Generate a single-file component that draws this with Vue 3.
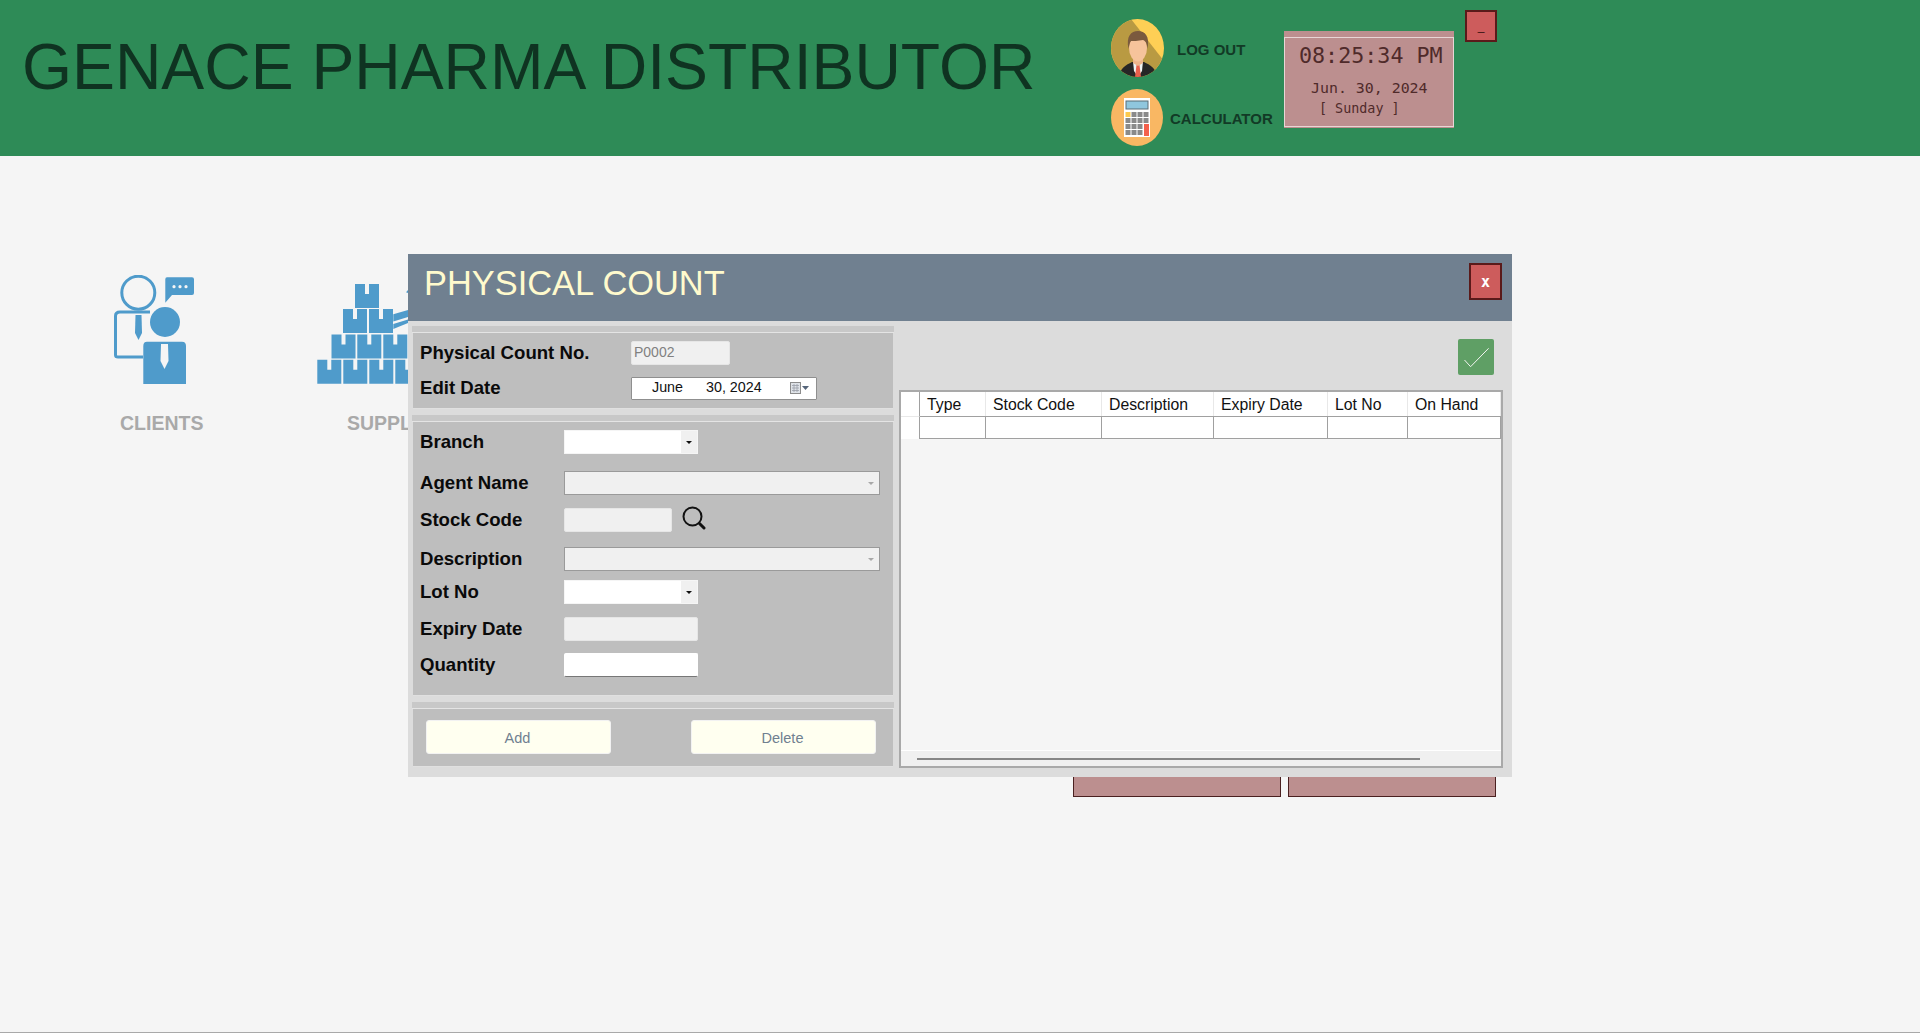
<template>
  <div class="page">
    <header class="topbar">
      <h1 class="brand">GENACE PHARMA DISTRIBUTOR</h1>
      <div class="shortcuts">
        <div class="shortcut">
          <svg class="round-icon" viewBox="0 0 53 58" width="53" height="58">
            <defs>
              <clipPath id="avatarClip"><ellipse cx="26.5" cy="29" rx="26.5" ry="29" /></clipPath>
            </defs>
            <g clip-path="url(#avatarClip)">
              <rect width="53" height="58" fill="#fecf55" />
              <path d="M0 0H20L53 42V58H0Z" fill="#b99a42" />
              <path d="M8 58C9 49 15 46 21 43H33C39 46 45 49 46 58Z" fill="#262626" />
              <path d="M22 42H32L31 52L27 58L23 52Z" fill="#eef2f2" />
              <path d="M25.500 46H28.500L30 58H24Z" fill="#e8604c" />
              <path d="M22 36H32V44L27 47L22 44Z" fill="#eeb48c" />
              <ellipse cx="27" cy="29" rx="9" ry="13.500" fill="#f6c39b" />
              <path d="M17.500 30C15 17 20 12 27 12C34 12 39 17 36.500 30C36 25 35 22 32 21C27 22 22 22 20 22C18.500 24 18 27 17.500 30Z" fill="#7b5a3e" />
            </g>
          </svg>
          <span class="shortcut-label logout">LOG OUT</span>
        </div>
        <div class="shortcut">
          <svg class="round-icon" viewBox="0 0 52 57" width="52" height="57">
            <ellipse cx="26" cy="28.500" rx="26" ry="28.500" fill="#f9b763" />
            <rect x="13" y="9" width="26" height="39" fill="#ffffff" />
            <rect x="15" y="12" width="22" height="8" fill="#8fc6dd" stroke="#5b6d75" />
            <g fill="#8a8a8a">
              <rect v-for="key in calcKeys" :key="key.id" :x="key.x" :y="key.y" width="5" height="5" :fill="key.fill" />
            </g>
            <rect x="33" y="35" width="5" height="12" fill="#f4604c" />
          </svg>
          <span class="shortcut-label calc">CALCULATOR</span>
        </div>
      </div>
      <div class="clock">
        <div class="clock-inner">
          <div class="clock-time">08:25:34 PM</div>
          <div class="clock-date">Jun. 30, 2024</div>
          <div class="clock-day">[ Sunday ]</div>
        </div>
      </div>
      <button type="button" class="minimize">_</button>
    </header>

    <main class="content">
      <section class="tiles">
        <div class="tile clients">
          <svg class="tile-icon" viewBox="0 0 80 109" width="80" height="109">
            <g fill="#4f9bcb">
              <circle cx="24.300" cy="17.700" r="16.500" fill="none" stroke="#4f9bcb" stroke-width="3" />
              <path d="M53 2.300H78Q80 2.300 80 4.300V18Q80 20 78 20H58L51.300 27.700V4.300Q51.300 2.300 53 2.300Z" />
              <path d="M36 37H6Q1.500 37 1.500 41V80Q1.500 82 4 82H29" fill="none" stroke="#4f9bcb" stroke-width="3" />
              <path d="M21.500 40H27.500L28 58L24.500 65L21 58Z" />
              <circle cx="51" cy="47" r="15" />
              <path d="M33 66.700H68Q72 66.700 72 71V109H29.300V71Q29.300 66.700 33 66.700Z" />
            </g>
            <g fill="#f5f5f5">
              <circle cx="60" cy="11.700" r="1.600" />
              <circle cx="66" cy="11.700" r="1.600" />
              <circle cx="72" cy="11.700" r="1.600" />
              <path d="M47 69H54L54.500 86L50.500 94L46.500 86Z" />
            </g>
          </svg>
          <div class="tile-label">CLIENTS</div>
        </div>
        <div class="tile supplier">
          <svg class="tile-icon" viewBox="0 0 110 109" width="110" height="109">
            <g fill="#4f9bcb">
              <path v-for="box in supplierBoxes" :key="box.id" :d="box.d" />
              <path d="M76.300 39.300L91 35V42L76.300 46.500Z" />
              <path d="M76.300 49L91 44.500V48L76.300 54Z" />
              <path d="M89 17.300L91 15V18Z" />
            </g>
          </svg>
          <div class="tile-label">SUPPLIERS</div>
        </div>
      </section>
      <section class="print-row">
        <div class="print-btn"></div>
        <div class="print-btn"></div>
      </section>

      <div class="dialog">
        <div class="dialog-head">
          <h2 class="dialog-title">PHYSICAL COUNT</h2>
          <button type="button" class="dialog-close">x</button>
        </div>
        <div class="dialog-body">
          <div class="form-side">
            <div class="group">
              <div class="group-bar"></div>
              <div class="group-box head-box">
                <div class="form-row row-no">
                  <label class="field-label wide">Physical Count No.</label>
                  <div class="input disabled code-box">P0002</div>
                </div>
                <div class="form-row row-date">
                  <label class="field-label wide">Edit Date</label>
                  <div class="date-box">
                    <span class="date-month">June</span>
                    <span class="date-rest">30, 2024</span>
                    <svg class="cal-icon" viewBox="0 0 20 12" width="20" height="12">
                      <rect x="0.500" y="0.500" width="10" height="11" fill="#dfe3e8" stroke="#8c8c8c" />
                      <path d="M2 3.500H9M2 6H9M2 8.500H9M4 2V10M7 2V10" stroke="#9aa0a8" stroke-width="0.800" />
                      <path d="M12 4H19L15.500 8Z" fill="#56657a" />
                    </svg>
                  </div>
                </div>
              </div>
            </div>

            <div class="group">
              <div class="group-bar"></div>
              <div class="group-box fields-box">
                <div class="form-row row-branch">
                  <label class="field-label">Branch</label>
                  <div class="combo">
                    <span class="combo-btn"><i class="caret"></i></span>
                  </div>
                </div>
                <div class="form-row row-agent">
                  <label class="field-label">Agent Name</label>
                  <div class="combo-off"><i class="caret gray"></i></div>
                </div>
                <div class="form-row row-stock">
                  <label class="field-label">Stock Code</label>
                  <div class="input disabled short"></div>
                  <svg class="search-icon" viewBox="0 0 24 24" width="24" height="24">
                    <circle cx="10.500" cy="10.500" r="9" fill="none" stroke="#111" stroke-width="2" />
                    <path d="M17.500 17.500L22 22" stroke="#111" stroke-width="3" stroke-linecap="round" />
                  </svg>
                </div>
                <div class="form-row row-desc">
                  <label class="field-label">Description</label>
                  <div class="combo-off"><i class="caret gray"></i></div>
                </div>
                <div class="form-row row-lot">
                  <label class="field-label">Lot No</label>
                  <div class="combo">
                    <span class="combo-btn"><i class="caret"></i></span>
                  </div>
                </div>
                <div class="form-row row-expiry">
                  <label class="field-label">Expiry Date</label>
                  <div class="input disabled medium"></div>
                </div>
                <div class="form-row row-qty">
                  <label class="field-label">Quantity</label>
                  <div class="input qty medium"></div>
                </div>
              </div>
            </div>

            <div class="group">
              <div class="group-bar"></div>
              <div class="group-box actions-box">
                <button type="button" class="action">Add</button>
                <button type="button" class="action">Delete</button>
              </div>
            </div>
          </div>

          <div class="grid-side">
            <div class="grid-tools">
              <button type="button" class="confirm">
                <svg viewBox="0 0 36 36" width="36" height="36">
                  <path d="M6.500 21L12.600 27.700L30.600 9.300" fill="none" stroke="#f2f5f0" stroke-width="1" />
                </svg>
              </button>
            </div>
            <div class="grid">
              <div class="grid-row grid-head">
                <div v-for="col in columns" :key="col.name" class="cell" :style="{ width: col.width + 'px' }">{{ col.name }}</div>
              </div>
              <div class="grid-row grid-blank">
                <div v-for="col in columns" :key="col.name" class="cell" :style="{ width: col.width + 'px' }"></div>
              </div>
              <div class="grid-fill"></div>
              <div class="grid-scroll"><div class="grid-thumb"></div></div>
            </div>
          </div>
        </div>
      </div>
    </main>
  </div>
</template>

<script setup>
const columns = [
  { name: '', width: 19 },
  { name: 'Type', width: 66 },
  { name: 'Stock Code', width: 116 },
  { name: 'Description', width: 112 },
  { name: 'Expiry Date', width: 114 },
  { name: 'Lot No', width: 80 },
  { name: 'On Hand', width: 93 }
]

const calcKeys = []
for (let row = 0; row < 4; row++) {
  for (let col = 0; col < 4; col++) {
    if (col === 3 && row > 1) continue
    calcKeys.push({
      id: row + '-' + col,
      x: 14.5 + col * 6,
      y: 23 + row * 6,
      fill: row === 0 && col === 0 ? '#fcc94d' : '#8a8a8a'
    })
  }
}

// one box with its tape notch, pyramid rows from the top
const boxAt = (x, y) => ({
  id: x + '-' + y,
  d: `M${x} ${y}H${x + 10}V${y + 10}H${x + 14}V${y}H${x + 24}V${y + 24}H${x}Z`
})
const supplierBoxes = [
  boxAt(38, 9),
  boxAt(26, 34),
  boxAt(52, 34),
  boxAt(14.5, 59.5),
  boxAt(40.3, 59.5),
  boxAt(66.3, 59.5),
  boxAt(0.3, 84.7),
  boxAt(26.3, 84.7),
  boxAt(52.3, 84.7),
  boxAt(78.3, 84.7)
]
</script>

<style>
html,
body {
  margin: 0;
  background: #f5f5f5;
}
</style>

<style scoped>
.page {
  height: 1033px;
  box-sizing: border-box;
  border-bottom: 1px solid #a9a9a9;
  background: #f5f5f5;
  overflow: hidden;
  font-family: "Liberation Sans", Arial, sans-serif;
}

.topbar {
  height: 156px;
  background: #2e8b57;
  display: flex;
  align-items: flex-start;
}

.brand {
  margin: 28px 0 0 22px;
  width: 1089px;
  font-size: 64.300px;
  line-height: 78px;
  font-weight: 400;
  color: #0f3321;
  white-space: nowrap;
}

.shortcuts {
  margin-top: 19px;
  width: 173px;
  display: flex;
  flex-direction: column;
  gap: 12px;
}

.shortcut {
  display: flex;
  align-items: center;
}

.round-icon {
  flex: none;
}

.shortcut-label {
  font-size: 15px;
  font-weight: 700;
  color: #123a26;
  white-space: nowrap;
}

.shortcut-label.logout {
  margin: 3px 0 0 13px;
}

.shortcut-label.calc {
  margin: 2px 0 0 7px;
}

.clock {
  margin-top: 31px;
  width: 170px;
  height: 97px;
  box-sizing: border-box;
  padding-top: 6px;
  background: #bc8f8f;
}

.clock-inner {
  height: 90px;
  box-sizing: border-box;
  border: 1px solid #e8d6d6;
  color: #4f2a2a;
  font-family: "DejaVu Sans Mono", "Liberation Mono", monospace;
}

.clock-time {
  margin: 5px 0 0 14px;
  font-size: 21.700px;
  line-height: 26px;
}

.clock-date {
  margin: 11px 0 0 26px;
  font-size: 14.900px;
  line-height: 17px;
}

.clock-day {
  margin: 3px 0 0 34px;
  font-size: 13.400px;
  line-height: 17px;
}

.minimize {
  margin: 10px 0 0 11px;
  width: 32px;
  height: 32px;
  box-sizing: border-box;
  padding: 0;
  border: 2px solid #5a1a1a;
  background: #cd5c5c;
  color: #3d1414;
  font-family: "Liberation Sans", Arial, sans-serif;
  font-size: 12px;
}

.content {
  height: 876px;
  position: relative;
}

.tiles {
  display: flex;
  padding: 119px 0 0 114px;
  height: 527px;
  box-sizing: border-box;
}

.tile {
  width: 203px;
}

.tile-icon {
  display: block;
}

.tile-label {
  margin: 28px 0 0 6px;
  font-size: 19.500px;
  font-weight: 700;
  color: #a9a9a9;
  line-height: 22px;
}

.supplier .tile-label {
  margin-left: 30px;
}

.print-row {
  display: flex;
  gap: 7px;
  padding-left: 1073px;
  margin-top: -40px;
}

.print-btn {
  width: 208px;
  height: 154px;
  box-sizing: border-box;
  border: 1px solid #4a2020;
  background: #bc8f8f;
}

.dialog {
  position: absolute;
  left: 408px;
  top: 98px;
  width: 1104px;
  height: 523px;
  background: #dcdcdc;
}

.dialog-head {
  height: 67px;
  background: #708090;
  display: flex;
  align-items: flex-start;
  justify-content: space-between;
}

.dialog-title {
  margin: 9px 0 0 16px;
  font-size: 34.400px;
  line-height: 40px;
  font-weight: 400;
  color: #fffacd;
}

.dialog-close {
  margin: 9px 10px 0 0;
  width: 33px;
  height: 37px;
  box-sizing: border-box;
  padding: 0;
  border: 2px solid #5a1a1a;
  background: #cd5c5c;
  color: #fff;
  font-family: "DejaVu Sans Mono", monospace;
  font-size: 15px;
  font-weight: 700;
}

.dialog-body {
  display: flex;
  height: 456px;
}

.form-side {
  flex: none;
  width: 482px;
  margin-left: 4px;
  padding-top: 5px;
}

.group {
  margin-bottom: 6px;
}

.group-bar {
  height: 6px;
  background: #c8c8c8;
  border-bottom: 1px solid #e4e4e4;
}

.group-box {
  margin: 0 1px;
  background: #bebebe;
  box-sizing: border-box;
  border-bottom: 1px solid #e0e0e0;
}

.head-box {
  height: 76px;
}

.fields-box {
  height: 274px;
}

.actions-box {
  height: 58px;
  display: flex;
  justify-content: space-between;
  padding: 11px 17px 0 13px;
}

.form-row {
  display: flex;
  align-items: center;
  height: 24px;
  padding-left: 7px;
}

.row-no {
  padding-top: 8px;
}

.row-date {
  padding-top: 11px;
}

.row-branch {
  padding-top: 8px;
}

.row-agent {
  padding-top: 17px;
}

.row-stock {
  padding-top: 13px;
}

.row-desc {
  padding-top: 15px;
}

.row-lot {
  padding-top: 9px;
}

.row-expiry {
  padding-top: 13px;
}

.row-qty {
  padding-top: 12px;
}

.field-label {
  width: 144px;
  flex: none;
  font-size: 18.600px;
  font-weight: 700;
  color: #0a0a0a;
  white-space: nowrap;
}

.field-label.wide {
  width: 211px;
}

.input {
  height: 24px;
  box-sizing: border-box;
  border-radius: 2px;
  border: 1px solid #e6e6e6;
  flex: none;
}

.input.disabled {
  background: #f0f0f0;
  color: #808080;
}

.code-box {
  width: 99px;
  font-size: 14px;
  line-height: 21px;
  padding-left: 2px;
}

.short {
  width: 108px;
}

.medium {
  width: 134px;
}

.input.qty {
  background: #fff;
  border-color: #fff;
  border-bottom: 1px solid #777;
}

.search-icon {
  margin: -4px 0 0 10px;
}

.date-box {
  width: 186px;
  height: 23px;
  box-sizing: border-box;
  border: 1px solid #8f8f8f;
  border-radius: 1px;
  background: #fff;
  position: relative;
  font-size: 14.300px;
  line-height: 19px;
  color: #111;
}

.date-month {
  margin-left: 20px;
}

.date-rest {
  margin-left: 23px;
}

.cal-icon {
  position: absolute;
  right: 6px;
  top: 4px;
}

.combo {
  width: 134px;
  height: 24px;
  background: #fff;
  display: flex;
  justify-content: flex-end;
  box-sizing: border-box;
  border: 1px solid #f5f5f5;
}

.combo-btn {
  width: 16px;
  background: #f0f0f0;
  display: flex;
  align-items: center;
  justify-content: center;
}

.caret {
  display: block;
  width: 0;
  height: 0;
  border-left: 3px solid transparent;
  border-right: 3px solid transparent;
  border-top: 3px solid #111;
}

.caret.gray {
  border-top-color: #a8a8a8;
  margin: 0 5px 0 auto;
}

.combo-off {
  width: 316px;
  height: 24px;
  box-sizing: border-box;
  border: 1px solid #9a9a9a;
  background: #f0f0f0;
  display: flex;
  align-items: center;
}

.action {
  width: 185px;
  height: 34px;
  padding: 1px 2px 0 0;
  border: 1px solid #f2f2f2;
  border-radius: 3px;
  background: #fffff0;
  color: #708090;
  font-family: "Liberation Sans", Arial, sans-serif;
  font-size: 14.500px;
}

.grid-side {
  flex: none;
  margin-left: 5px;
  width: 604px;
}

.grid-tools {
  height: 69px;
  display: flex;
  justify-content: flex-end;
  align-items: flex-start;
  padding: 18px 9px 0 0;
  box-sizing: border-box;
}

.confirm {
  width: 36px;
  height: 36px;
  padding: 0;
  border: none;
  border-radius: 2px;
  background: #5f9f65;
  display: block;
}

.confirm svg {
  display: block;
}

.grid {
  height: 378px;
  box-sizing: border-box;
  border: 2px solid #a9a9a9;
  background: #f5f5f5;
  display: flex;
  flex-direction: column;
}

.grid-row {
  display: flex;
  background: #fff;
}

.grid-head {
  height: 24px;
}

.grid-blank {
  height: 23px;
  box-sizing: border-box;
}

.grid-blank .cell {
  border-top: 1px solid #a0a0a0;
  border-bottom: 1px solid #a0a0a0;
}

.grid-blank .cell:first-child {
  border-top-color: #e8e8e8;
  border-bottom: none;
}

.cell {
  box-sizing: border-box;
  flex: none;
  padding-left: 7px;
  border-right: 1px solid #a0a0a0;
  font-size: 15.800px;
  line-height: 25px;
  color: #111;
  white-space: nowrap;
}

.grid-head .cell {
  border-right-color: #e8e8e8;
}

.grid-head .cell:first-child {
  border-right-color: #a0a0a0;
}

.grid-fill {
  flex: 1;
}

.grid-scroll {
  height: 16px;
  box-sizing: border-box;
  border-top: 1px solid #fff;
  background: #f0f0f0;
  padding: 7px 0 0 16px;
}

.grid-thumb {
  width: 503px;
  height: 2px;
  background: #888;
}
</style>
